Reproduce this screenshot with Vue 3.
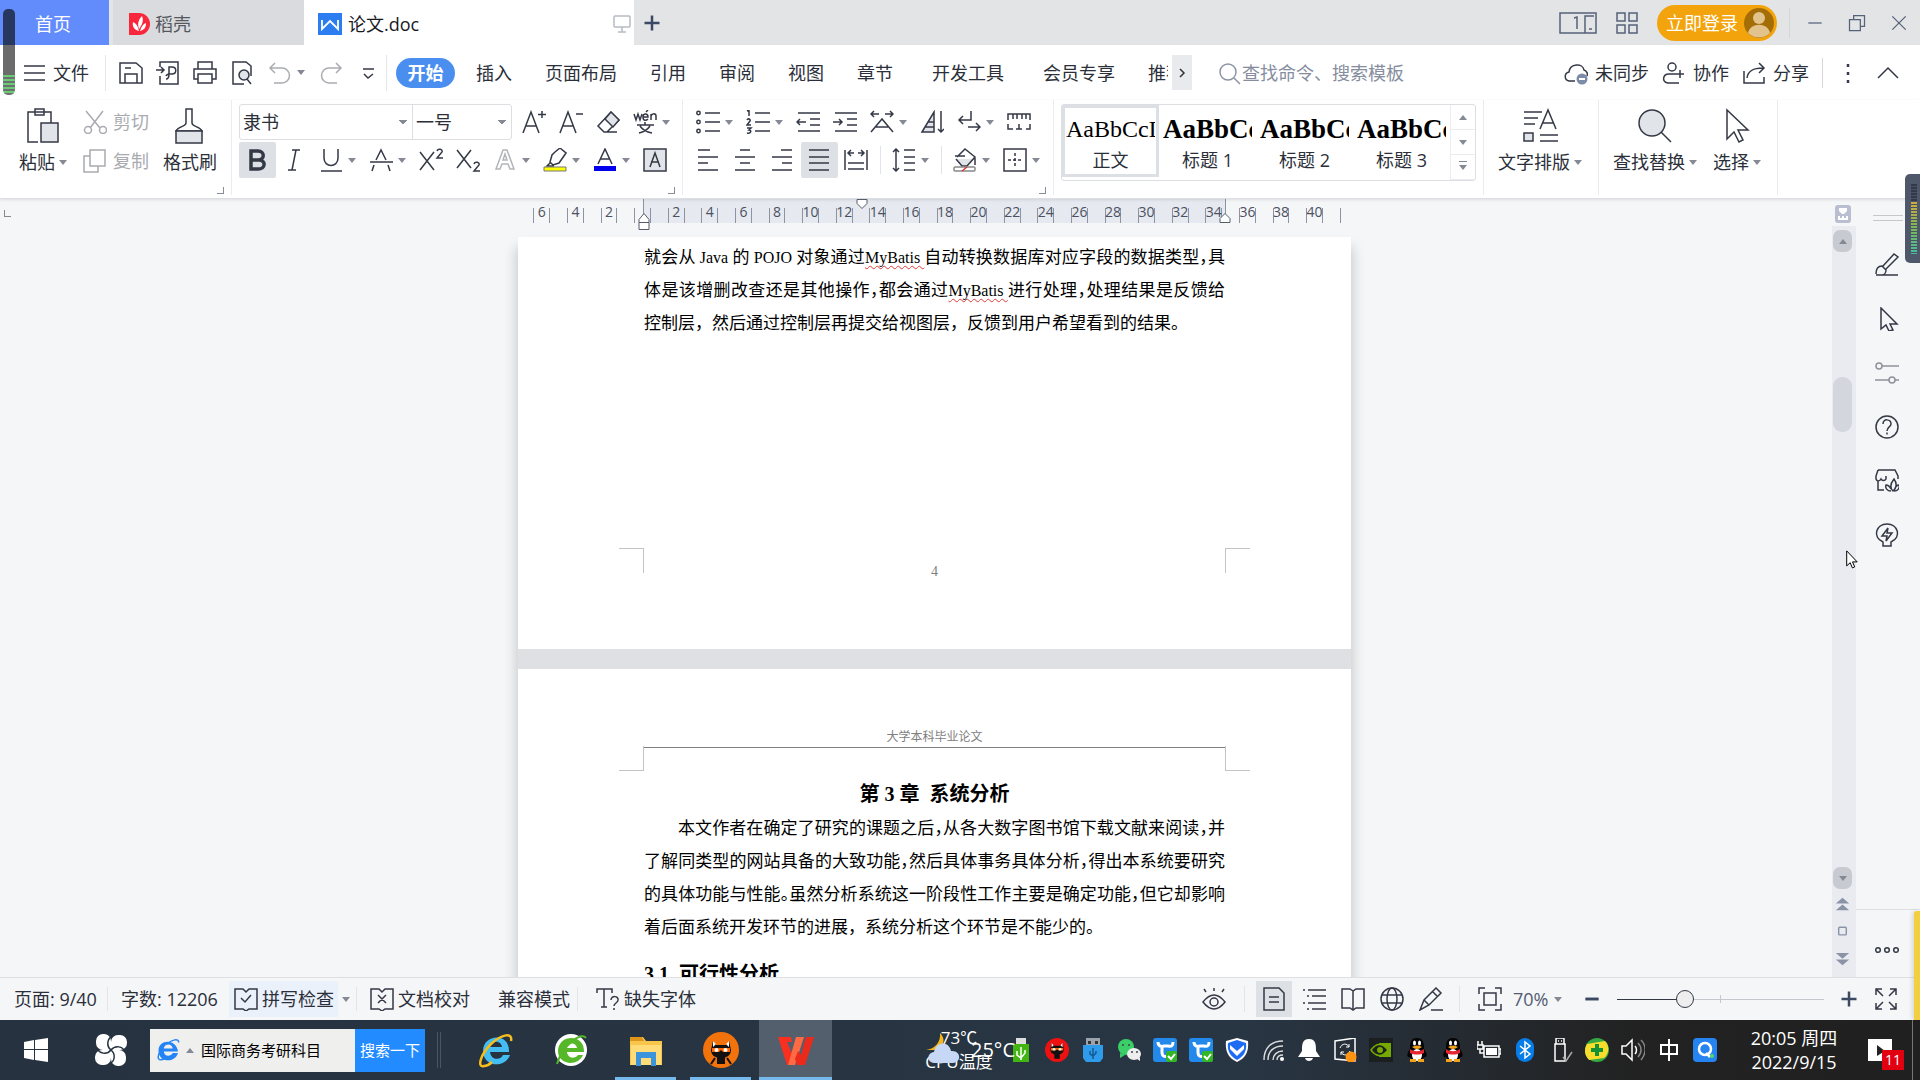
<template>
  <div class="desktop">
    <!-- 标签栏 -->
    <header class="title-bar">
      <button class="doc-tab home">首页</button>
      <button class="doc-tab shell">
        <svg class="icon" viewBox="0 0 24 24" v-html="icons.docer"></svg>稻壳
      </button>
      <button class="doc-tab current">
        <svg class="icon" viewBox="0 0 24 24" v-html="icons.writer"></svg>论文.doc
        <svg class="icon screen" viewBox="0 0 24 24" v-html="icons.screen"></svg>
      </button>
      <button class="new-tab" aria-label="新建"><svg class="icon" viewBox="0 0 24 24" v-html="icons.plus"></svg></button>
      <div class="window-tools">
        <svg class="icon wide" viewBox="0 0 38 24" v-html="icons.layout"></svg>
        <svg class="icon grid-icon" viewBox="0 0 24 24" v-html="icons.grid"></svg>
        <button class="login">立即登录<svg class="avatar" viewBox="0 0 30 30" v-html="icons.avatar"></svg></button>
        <span class="bar"></span>
        <button v-for="w in ['min', 'restore', 'close']" :key="w" class="win-btn" :aria-label="w">
          <svg class="icon" viewBox="0 0 24 24" v-html="icons[w]"></svg>
        </button>
      </div>
    </header>

    <!-- 菜单栏 -->
    <nav class="menu-bar">
      <button class="file-btn"><svg class="icon" viewBox="0 0 24 24" v-html="icons.menu"></svg>文件</button>
      <div class="quick">
        <button v-for="q in quick" :key="q" :class="['quick-btn', q]" :aria-label="q">
          <svg class="icon" viewBox="0 0 24 24" v-html="icons[q]"></svg>
          <i v-if="q === 'undo'" class="caret"></i>
        </button>
      </div>
      <div class="menu-tabs">
        <button class="menu-tab active">开始</button>
        <button v-for="m in menus" :key="m" class="menu-tab" :class="{ long: m === '开发工具' || m === '会员专享' }">{{ m }}</button>
        <button class="menu-tab cut">推荐</button>
      </div>
      <button class="more-tabs" aria-label="更多"><svg viewBox="0 0 20 20" v-html="icons.right"></svg></button>
      <label class="command-search">
        <svg class="icon" viewBox="0 0 24 24" v-html="icons.search"></svg>
        <input type="text" placeholder="查找命令、搜索模板" />
      </label>
      <div class="share-tools">
        <button v-for="s in shares" :key="s.icon" class="share-btn">
          <svg class="icon" viewBox="0 0 24 24" v-html="icons[s.icon]"></svg>{{ s.label }}
        </button>
        <span class="bar"></span>
        <button class="dots" aria-label="更多选项"><svg class="icon" viewBox="0 0 24 24" v-html="icons.dots"></svg></button>
        <button class="fold" aria-label="收起"><svg class="icon" viewBox="0 0 24 24" v-html="icons.up"></svg></button>
      </div>
    </nav>

    <!-- 功能区 -->
    <section class="ribbon">
      <div class="group clip-group">
        <button class="big"><svg viewBox="0 0 36 36" v-html="icons.paste"></svg><span>粘贴<i class="caret"></i></span></button>
        <div class="small-list">
          <button class="small"><svg class="icon" viewBox="0 0 24 24" v-html="icons.cut"></svg>剪切</button>
          <button class="small"><svg class="icon" viewBox="0 0 24 24" v-html="icons.copy"></svg>复制</button>
        </div>
        <button class="big brush"><svg viewBox="0 0 36 36" v-html="icons.painter"></svg><span>格式刷</span></button>
        <i class="launcher"></i>
      </div>

      <div class="group font-group">
        <div class="tool-row">
          <div class="selects">
            <select class="family" aria-label="字体"><option>隶书</option></select>
            <select class="size" aria-label="字号"><option>一号</option></select>
          </div>
          <tool-btn v-for="t in fontRow1" :key="t.icon" v-bind="t" />
        </div>
        <div class="tool-row">
          <tool-btn v-for="t in fontRow2" :key="t.icon" v-bind="t" />
        </div>
        <i class="launcher"></i>
      </div>

      <div class="group para-group">
        <div class="tool-row">
          <tool-btn v-for="t in paraRow1" :key="t.icon" v-bind="t" />
        </div>
        <div class="tool-row">
          <template v-for="t in paraRow2" :key="t.icon">
            <span v-if="t.bar" class="tool-bar"></span>
            <tool-btn v-bind="t" />
          </template>
        </div>
        <i class="launcher"></i>
      </div>

      <div class="group style-group">
        <div class="gallery">
          <button v-for="(s, i) in styles" :key="s" class="style-item" :class="{ selected: i === 0 }">
            <span class="sample">AaBbCcDd</span>
            <span class="style-name">{{ s }}</span>
          </button>
          <div class="gallery-scroll">
            <button aria-label="上"><i class="caret flip"></i></button>
            <button aria-label="下"><i class="caret"></i></button>
            <button aria-label="全部"><i class="caret lined"></i></button>
          </div>
        </div>
      </div>

      <div class="group layout-group">
        <button class="big"><svg viewBox="0 0 36 36" v-html="icons.textLayout"></svg><span>文字排版<i class="caret"></i></span></button>
      </div>
      <div class="group find-group">
        <button class="big"><svg viewBox="0 0 36 36" v-html="icons.find"></svg><span>查找替换<i class="caret"></i></span></button>
        <button class="big"><svg viewBox="0 0 36 36" v-html="icons.select"></svg><span>选择<i class="caret"></i></span></button>
      </div>
    </section>

    <!-- 文档区 -->
    <main class="workspace">
      <div class="doc-view">
        <i class="tab-mark"></i>
        <div class="ruler">
          <div class="ruler-text"></div>
          <div class="ruler-scale">
            <span v-for="(n, i) in rulerMarks" :key="i" class="mark" :class="{ last: i === rulerMarks.length - 1 }">{{ n }}</span>
          </div>
          <div class="indents">
            <svg class="indent first" viewBox="0 0 12 10"><path d="M1 .5h10v4l-5 5-5-5z" /></svg>
            <svg class="indent left" viewBox="0 0 12 18"><path d="M1 6.500l5-6 5 6v3H1zM1 9.500h10v7H1z" /></svg>
            <svg class="indent right" viewBox="0 0 12 10"><path d="M1 9.500v-4l5-5 5 5v4z" /></svg>
          </div>
        </div>
        <div class="pages">
          <article class="page page-four">
            <div class="lines">
              <p class="line full">就会从<span> Java </span>的<span> POJO </span>对象通过<span> <u>MyBatis </u></span>自动转换数据库对应字段的数据类型<b>，</b>具</p>
              <p class="line full">体是该增删改查还是其他操作<b>，</b>都会通过<span> <u>MyBatis </u></span>进行处理<b>，</b>处理结果是反馈给</p>
              <p class="line">控制层，然后通过控制层再提交给视图层，反馈到用户希望看到的结果。</p>
            </div>
            <div class="page-foot"><i class="crop bl"></i><span>4</span><i class="crop br"></i></div>
          </article>
          <article class="page page-five">
            <div class="page-head">大学本科毕业论文</div>
            <div class="head-crops"><i class="crop tl"></i><i class="crop tr"></i></div>
            <h1>第 3 章&nbsp; 系统分析</h1>
            <div class="lines">
              <p class="line full indented">本文作者在确定了研究的课题之后<b>，</b>从各大数字图书馆下载文献来阅读<b>，</b>并</p>
              <p class="line full">了解同类型的网站具备的大致功能<b>，</b>然后具体事务具体分析<b>，</b>得出本系统要研究</p>
              <p class="line full">的具体功能与性能<b>。</b>虽然分析系统这一阶段性工作主要是确定功能<b>，</b>但它却影响</p>
              <p class="line">着后面系统开发环节的进展，系统分析这个环节是不能少的。</p>
            </div>
            <h2>3.1&nbsp; 可行性分析</h2>
          </article>
        </div>
      </div>

      <div class="scroll-bar">
        <button class="ruler-toggle" aria-label="标尺"><svg viewBox="0 0 16 18" v-html="icons.rulerToggle"></svg></button>
        <div class="track">
          <button class="step" aria-label="向上"><i class="caret flip"></i></button>
          <div class="thumb"></div>
          <button class="step down" aria-label="向下"><i class="caret"></i></button>
          <svg class="jump" viewBox="0 0 20 88" v-html="icons.jump"></svg>
        </div>
      </div>

      <aside class="side-bar">
        <i class="grip"></i>
        <button v-for="s in sideTools" :key="s" class="side-btn" :aria-label="s">
          <svg class="icon" viewBox="0 0 24 24" v-html="icons[s]"></svg>
        </button>
        <button class="side-more" aria-label="更多"><svg class="icon" viewBox="0 0 24 24" v-html="icons.rings"></svg></button>
      </aside>
    </main>

    <!-- 状态栏 -->
    <footer class="status-bar">
      <span class="page-no">页面: 9/40</span>
      <span class="words">字数: 12206</span>
      <button class="spell"><svg class="icon" viewBox="0 0 24 24" v-html="icons.spell"></svg>拼写检查</button>
      <i class="caret"></i>
      <button class="proof"><svg class="icon" viewBox="0 0 24 24" v-html="icons.proof"></svg>文档校对</button>
      <span class="compat">兼容模式</span>
      <button class="missing"><svg class="icon" viewBox="0 0 24 24" v-html="icons.missing"></svg>缺失字体</button>
      <div class="view-tools">
        <button v-for="v in views" :key="v" :class="['view-btn', v]" :aria-label="v">
          <svg class="icon" viewBox="0 0 24 24" v-html="icons[v]"></svg>
        </button>
        <button class="zoom-value">70%<i class="caret"></i></button>
        <button class="zoom-step" aria-label="缩小"><svg class="icon" viewBox="0 0 24 24" v-html="icons.minus"></svg></button>
        <input v-model="zoom" class="zoom-slider" type="range" min="0" max="100" aria-label="缩放" />
        <button class="zoom-step" aria-label="放大"><svg class="icon" viewBox="0 0 24 24" v-html="icons.plus"></svg></button>
        <button class="full-btn" aria-label="全屏"><svg class="icon" viewBox="0 0 24 24" v-html="icons.fullscreen"></svg></button>
      </div>
    </footer>

    <!-- 任务栏 -->
    <footer class="task-bar">
      <button class="start" aria-label="开始菜单"><svg viewBox="0 0 24 24" v-html="icons.windows"></svg></button>
      <button class="pinwheel" aria-label="助手"><svg viewBox="0 0 32 32" v-html="icons.pinwheel"></svg></button>
      <form class="web-search" @submit.prevent>
        <svg class="ie" viewBox="0 0 32 32" v-html="icons.ieBlue"></svg>
        <i class="caret flip"></i>
        <input v-model="keyword" type="text" aria-label="搜索" />
        <button>搜索一下</button>
      </form>
      <i class="task-grip"></i>
      <button v-for="a in apps" :key="a.icon" class="app" :class="a.state" :aria-label="a.icon">
        <svg viewBox="0 0 36 36" v-html="icons[a.icon]"></svg>
      </button>

      <div class="task-right">
        <div class="weather">
          <span>73℃</span>
          <span>CPU温度</span>
          <svg class="cloud" viewBox="0 0 36 36" v-html="icons.weather"></svg>
          <span class="outdoor">25°C</span>
        </div>
        <div class="tray">
          <svg v-for="(t, i) in tray" :key="i" viewBox="0 0 24 24" v-html="icons[t]"></svg>
        </div>
        <div class="clock"><span>20:05 周四</span><span>2022/9/15</span></div>
        <button class="notice" aria-label="通知">
          <svg viewBox="0 0 24 24" v-html="icons.notice"></svg><span class="count">11</span>
        </button>
      </div>
    </footer>

    <!-- 悬浮音量计 -->
    <i class="meter meter-left"></i>
    <i class="meter meter-right"></i>
    <i class="yellow-strip"></i>
    <svg class="pointer" viewBox="0 0 12 19"><path d="M.7.9v15l3.500-3.200 2.200 5.200 2.300-1-2.200-5h4.700z" /></svg>
  </div>
</template>

<script setup>
import { ref, h } from 'vue'

const zoom = ref(31)
const keyword = ref('国际商务考研科目')

const quick = ['save', 'exportPdf', 'print', 'preview', 'undo', 'redo', 'more']
const menus = ['插入', '页面布局', '引用', '审阅', '视图', '章节', '开发工具', '会员专享']
const shares = [
  { icon: 'cloud', label: '未同步' },
  { icon: 'people', label: '协作' },
  { icon: 'share', label: '分享' }
]
const fontRow1 = [
  { icon: 'grow' }, { icon: 'shrink' }, { icon: 'eraser' }, { icon: 'pinyin', drop: true }
]
const fontRow2 = [
  { icon: 'bold', on: true }, { icon: 'italic' }, { icon: 'underline', drop: true },
  { icon: 'strike', drop: true }, { icon: 'sup' }, { icon: 'sub' },
  { icon: 'outline', drop: true }, { icon: 'highlight', drop: true },
  { icon: 'color', drop: true }, { icon: 'shade' }
]
const paraRow1 = [
  { icon: 'bullets', drop: true }, { icon: 'numbers', drop: true }, { icon: 'outdent' },
  { icon: 'indent' }, { icon: 'scale', drop: true }, { icon: 'sort' },
  { icon: 'wrap', drop: true }, { icon: 'tabs' }
]
const paraRow2 = [
  { icon: 'left' }, { icon: 'center' }, { icon: 'alignRight' }, { icon: 'justify', on: true },
  { icon: 'distribute' }, { icon: 'spacing', drop: true, bar: true },
  { icon: 'fill', drop: true, bar: true }, { icon: 'borders', drop: true }
]
const styles = ['正文', '标题 1', '标题 2', '标题 3']
const rulerMarks = [6, 4, 2, '', ...Array.from({ length: 20 }, (_, i) => (i + 1) * 2), '']
const sideTools = ['sideBrush', 'arrow', 'sliders', 'help', 'store', 'bulb']
const views = ['eye', 'pageView', 'list', 'book', 'globe', 'pen', 'fit']
const apps = [
  { icon: 'ie' }, { icon: 'greenE' }, { icon: 'folder', state: 'running' },
  { icon: 'cat', state: 'running' }, { icon: 'wps', state: 'running front' }
]
const tray = [
  'usbGreen', 'redCat', 'usbBlue', 'wechat', 'tencent', 'tencent', 'shield', 'wifi', 'bell', 'update',
  'nvidia', 'qq', 'qq', 'battery', 'bluetooth', 'eject', 'safe', 'volume', 'ime', 'browser'
]

// 工具按钮
const ToolBtn = (props) => h('button', { class: ['tool', { on: props.on }], 'aria-label': props.icon }, [
  h('svg', { class: 'icon', viewBox: '0 0 24 24', innerHTML: icons[props.icon] }),
  props.drop ? h('i', { class: 'caret' }) : null
])
ToolBtn.props = ['icon', 'drop', 'on', 'bar']

const catFace = '<path d="M9 9l3 4h10l3-4 2 9c0 5-4 8-10 8S7 23 7 18z" fill="#111"/><path d="M9 9l3 3-3 3zM25 9l-3 3 3 3z" fill="#fff"/><path d="M8 16h18v4h-7l-2-2-2 2H8z" fill="#f60"/><circle cx="12.500" cy="18" r="2" fill="#fff"/><circle cx="21.500" cy="18" r="2" fill="#fff"/><path d="M13 25h8v7h-8z" fill="#111"/>'

const icons = {
  docer: '<path d="M2 1h10a11 11 0 0 1 0 22H2z" fill="#f9263c" stroke="none"/><path d="M12 19c-5-1-7-5-6-9 3 1 5 4 6 9zm0-2c-2-6 0-10 3-13 2 5 0 9-3 13zm1 2c1-4 3-7 6-8 0 5-2 7-6 8z" fill="#fff" stroke="none"/>',
  writer: '<path d="M0 1h24v22H0z" fill="#2b7df0" stroke="none"/><path d="M4 8v9l8-8 8 8V8" stroke="#fff" stroke-width="1.800"/>',
  screen: '<rect x="4" y="4" width="16" height="11" rx="1"/><path d="M12 15v5M8 20h8"/>',
  plus: '<path d="M12 3v18M3 12h18" stroke-width="3"/>',
  minus: '<path d="M4 12h16" stroke-width="3.500"/>',
  layout: '<path d="M26 22H1V2h36v20H26V5h9M15 7l3-1v12M30 18h3"/>',
  grid: '<path d="M2 2h8v8H2zM14 2h8v8h-8zM2 14h8v8H2zM14 14h8v8h-8z"/>',
  avatar: '<circle cx="15" cy="15" r="15" fill="#a56d06"/><circle cx="15" cy="10" r="6" fill="#e1c38b"/><path d="M4 25c2-11 20-11 22 0-6 6-16 6-22 0z" fill="#e1c38b"/>',
  min: '<path d="M4 12h16"/>',
  restore: '<path d="M3 8h13v13H3zM8 8V3h13v13h-5"/>',
  close: '<path d="M4 4l16 16M20 4L4 20"/>',
  menu: '<path d="M2 5h21M2 12h21M2 19h21"/>',
  save: '<path d="M1 2h16l6 5v15H1zM6 22v-9h12v9M6 7h6"/>',
  exportPdf: '<path d="M4 6V1h18v22H4v-8M0 9h8M5 6l3 3-3 3M10 18c2 0 3-2 3-5V6h3c5 0 5 7 0 7-2 0-5-1-6 2"/>',
  print: '<path d="M5 8V1h14v7M5 18H1V8h22v10h-4M5 13h14v9H5z"/>',
  preview: '<path d="M14 23H3V1h13l5 4v10M21 23l-4-5"/><circle cx="14" cy="14" r="5" fill="#e1e4e9"/>',
  undo: '<path d="M7 2L2 7l5 5M2 7h12a7 7 0 0 1 0 15H6" stroke="#aaacb0"/>',
  redo: '<path d="M17 2l5 5-5 5M22 7H10a7 7 0 0 0 0 15h8" stroke="#aaacb0"/>',
  more: '<path d="M7 8h11M8 13l4 4 5-4"/>',
  right: '<path d="M8 6l4 4-4 4" fill="none" stroke="#333" stroke-width="1.500"/>',
  search: '<circle cx="10" cy="11" r="8"/><path d="M16 17l6 6"/>',
  cloud: '<path d="M11 20H5C0 19 0 12 5 11c1-9 14-9 15-2 3 1 4 4 3 6"/><circle cx="18" cy="18" r="5.500" fill="#7b8ba8" stroke="none"/><path d="M15 18h6" stroke="#fff" stroke-width="2"/>',
  people: '<circle cx="10" cy="6" r="4"/><path d="M14 13H7c-7 0-7 9-1 9h11M14 13h8M18 9v8"/>',
  share: '<path d="M2 10v12h20v-6M5 17C6 9 12 7 21 7M17 2l5 5-5 5"/>',
  dots: '<path d="M12 3v3M12 11v3M12 19v3" stroke-width="2.500"/>',
  up: '<path d="M2 17L12 7l10 10"/>',
  paste: '<path d="M13 34H3V4h23v13M10 1h9v6h-9z"/><path d="M16 15h17v19H16z" fill="#e1e4e9"/>',
  painter: '<path d="M14 1h6v14c0 4 8 3 10 8H4c2-5 10-4 10-8z"/><path d="M4 23h26v12H4z" fill="#e1e4e9"/>',
  cut: '<path d="M3 1l14 17M20 1L7 18"/><circle cx="5" cy="20" r="3.500"/><circle cx="20" cy="20" r="3.500"/>',
  copy: '<path d="M7 1h15v16H7zM7 7H1v16h14v-6"/>',
  grow: '<path d="M1 23L9 2l8 21M4 16h10M20 1v7M16 4.500h8"/>',
  shrink: '<path d="M1 23L9 2l8 21M4 16h10M17 4h7"/>',
  eraser: '<path d="M8 22l-6-6L15 2l8 8-12 12zM8 22h13"/><path d="M9 9l6-7 8 8-6 7z" fill="#e1e4e9"/>',
  pinyin: '<path d="M1 4l2 6 2-6 2 6 2-6M10 7h5c0-4-5-4-5 0s3 4 5 2M18 10V4M18 6c1-3 5-3 5 0v4M13 2l2-2M4 15h17M12 12v3M7 16c2 3 7 6 12 7M17 16c-2 3-6 6-11 7"/>',
  bold: '<path d="M6 3v18h7c8 0 8-9 1-9H6h7c7 0 7-9 0-9z" stroke-width="3.500"/>',
  italic: '<path d="M10 2h8M6 22h8M14 2l-4 20"/>',
  underline: '<path d="M5 1v9c0 10 14 10 14 0V1M2 23h21"/>',
  strike: '<path d="M1 14h23M7 12l5-10 5 10M5 17l-2 6M19 17l2 6"/>',
  sup: '<path d="M1 4l14 18M15 4L1 22M18 3c1-3 6-2 5 1l-5 6h6"/>',
  sub: '<path d="M1 2l14 18M15 2L1 20M18 16c1-3 6-2 5 1l-5 6h6"/>',
  outline: '<path d="M3 21L10 2h4l7 19h-4l-2-5H9l-2 5zM10 12h4l-2-6z" stroke="#b3b5b9"/>',
  highlight: '<path d="M12 4l5-4 6 5-7 10-6 2-3-3 2-7zM8 14l-4 4h7"/><path d="M1 19h22v4H1z" fill="#ff0" stroke="#777" stroke-width="1"/>',
  color: '<path d="M5 16l7-15 7 15M7 11h10"/><path d="M1 18h22v5H1z" fill="#00e" stroke="none"/>',
  shade: '<path d="M1 1h22v22H1z" fill="#e1e4e9"/><path d="M7 19l5-14 5 14M8 14h8"/>',
  bullets: '<path d="M9 3h15M9 12h15M9 21h15"/><circle cx="2.500" cy="3" r="1.700"/><circle cx="2.500" cy="12" r="1.700"/><circle cx="2.500" cy="21" r="1.700"/>',
  numbers: '<path d="M9 3h15M9 12h15M9 21h15M1 1l2-1v6M1 10c1-2 4-1 3 1l-3 4h4M1 18h4l-2 2c3 0 2 4-2 3"/>',
  outdent: '<path d="M2 3h22M14 9h10M14 15h10M2 21h22M1 12h9M4 9l-3 3 3 3"/>',
  indent: '<path d="M2 3h22M14 9h10M14 15h10M2 21h22M0 12h9M6 9l3 3-3 3"/>',
  scale: '<path d="M1 22L12 9l11 13M6 17h12M1 4h8M4 1L1 4l3 3M23 4h-8M20 1l3 3-3 3"/>',
  sort: '<path d="M2 22L14 2v20zM8 12h6M5 17h9" fill="#e1e4e9"/><path d="M21 1v21M18 19l3 3 3-3"/>',
  wrap: '<path d="M14 1v9H2M6 6l-4 4 4 4M11 17h12M19 13l4 4-4 4"/>',
  tabs: '<path d="M1 10V4h22v6M6 4v5M10 4v5M15 4v5M19 4v5M1 14v5h5M23 14v5h-4M9 19h6M12 14v5"/>',
  left: '<path d="M2 2h12M2 9h20M2 15h10M2 22h20"/>',
  center: '<path d="M7 2h10M2 9h20M7 15h10M2 22h20"/>',
  alignRight: '<path d="M11 2h11M2 9h20M12 15h10M2 22h20"/>',
  justify: '<path d="M2 2h20M2 9h20M2 15h20M2 22h20"/>',
  distribute: '<path d="M1 2v20M23 2v20M4 15h16M4 21h16M4 5h6M7 2L4 5l3 3M14 5h6M17 2l3 3-3 3"/>',
  spacing: '<path d="M4 1v22M1 4l3-3 3 3M1 20l3 3 3-3M12 2h11M12 9h11M12 15h11M12 22h11"/>',
  fill: '<path d="M4 11h17l-7 7H9z" fill="#e1e4e9" stroke="none"/><path d="M2 8h10M4 9L12 1l10 8-8 9H9l-6-7M22 10v7"/><rect x="1" y="19" width="21" height="4" rx="1" stroke="#888" fill="#fff"/><path d="M9 23l5-4" stroke="#d33"/>',
  borders: '<path d="M1 1h22v22H1z"/><path d="M12 5v14M5 12h14" stroke-dasharray="3 2"/>',
  textLayout: '<path d="M2 4h18M2 10h14M2 16h11M18 21l8-19 8 19M21 15h10M18 27h18M18 33h18"/><path d="M2 25h9v8H2z" fill="#e1e4e9"/>',
  find: '<circle cx="15" cy="15" r="13" fill="#e1e4e9"/><path d="M24 24l10 10"/>',
  select: '<path d="M8 2v29l7-7 5 10 4-2-5-10h10z"/>',
  rulerToggle: '<rect width="16" height="18" rx="3" fill="#b9bed0"/><path d="M4 3h8v3L9 9H7L4 6zM3 11h2v2h2v-2h2v2h2v-2h2v4H3z" fill="#fff"/>',
  jump: '<path d="M3 13l7-6 7 6zM3 20l7-6 7 6zM3 65h14l-7 6zM3 72h14l-7 6z" fill="#8b93a6"/><rect x="6" y="38" width="8" height="8" rx="1" fill="none" stroke="#8b93a6" stroke-width="1.500"/>',
  sideBrush: '<path d="M1 22h22M1 21c0-5 2-8 6-8l4 4c0 3-2 5-4 5M8 13L19 1l4 3-12 12"/>',
  arrow: '<path d="M6 1v21l5-4 3 6 4-1-3-6h7z"/>',
  sliders: '<g stroke="#8e929b"><circle cx="4" cy="5" r="3"/><path d="M7 5h17M0 19h14M20 19h4"/><circle cx="17" cy="19" r="3"/></g>',
  help: '<circle cx="12" cy="12" r="11"/><path d="M8 9c0-6 8-5 8 0 0 3-4 3-4 7M12 17.500v2"/>',
  store: '<path d="M9 21H3v-9M3 1h17l3 6v3M3 1L1 7v3c1 3 4 2 5 0 1 2 4 2 5 0V7M18 22c-3-3-3-7 1-12 3 4 3 9-1 12zM16 22c-4 0-6-3-5-6 2 0 4 2 5 4M19 22c4 0 6-3 5-6-2 0-3 1-4 3"/>',
  bulb: '<path d="M8 19c-11-5-7-18 4-18s15 13 4 18v4H8zM13 5l-6 8h5l-1 5 6-8h-5z"/>',
  rings: '<circle cx="3" cy="12" r="2.300"/><circle cx="12" cy="12" r="2.300"/><circle cx="21" cy="12" r="2.300"/>',
  spell: '<path d="M9 22H1V2h8l3 3 3-3h8v20h-8l-3 2zM7 11l4 4 6-7"/>',
  proof: '<path d="M9 22H1V2h8l3 3 3-3h8v20h-8l-3 2zM8 8l8 8M16 8l-8 8"/>',
  missing: '<path d="M1 6V2h15v4M8 2v18M5 20h6M15 13c0-5 8-4 7 0 0 3-4 3-4 6M18 21v2"/>',
  eye: '<path d="M1 15q11-14 22 0-11 14-22 0zM12 1v3M2 2l2 3M22 2l-2 3"/><circle cx="12" cy="15" r="4"/>',
  pageView: '<path d="M2 1h15l5 5v17H2zM7 10h10M7 15h10"/>',
  list: '<path d="M6 3h18M10 9h14M6 16h18M10 22h14M1 3h2M5 9h2M1 16h2M5 22h2"/>',
  book: '<path d="M12 4l-3-2H1v19h8l3 2 3-2h8V2h-8zM12 4v19"/>',
  globe: '<circle cx="12" cy="12" r="11"/><ellipse cx="12" cy="12" rx="5" ry="11"/><path d="M2 8h20M2 16h20"/>',
  pen: '<path d="M1 23l4-10L17 1l5 5-12 12zM5 13l5 5M12 23h12M14 5l5 5"/>',
  fit: '<path d="M1 7V1h6M17 1h6v6M23 17v6h-6M7 23H1v-6M6 6h12v12H6z"/>',
  fullscreen: '<path d="M2 8V2h6M2 2l7 7M16 2h6v6M22 2l-7 7M22 16v6h-6M22 22l-7-7M8 22H2v-6M2 22l7-7"/>',
  windows: '<path d="M0 4l10-2v9H0zM11 2l13-2v11H11zM0 12h10v10L0 20zM11 12h13v12l-13-2z" fill="#fff"/>',
  pinwheel: '<g fill="#fff"><rect x="1" y="0" width="15" height="16" rx="7"/><rect x="16" y="1" width="16" height="15" rx="7"/><rect x="0" y="16" width="16" height="15" rx="7"/><rect x="16" y="16" width="15" height="16" rx="7"/><path d="M9 9h14v14H9z"/></g><path d="M16 16C11 12 12 4 18 2M16 16c4-5 12-4 14 2M16 16c5 4 4 12-2 14M16 16c-4 5-12 4-14-2" fill="none" stroke="#26323f" stroke-width="1.500"/>',
  ieBlue: '<path d="M26 18H12c1 7 9 7 12 2h7c-4 14-26 13-26-3C5 1 29 1 31 18zM12 14h12c-1-7-11-7-12 0z" fill="#2584f5" transform="translate(-3 0)"/><path d="M29 6c0-6-9-4-16 2M4 18C-1 27 2 32 11 27" fill="none" stroke="#2584f5" stroke-width="2"/>',
  ie: '<path d="M31 20H12c1 8 10 9 13 3h7c-5 14-27 12-27-4C5 2 32 0 31 20zM12 15h12c-1-7-11-7-12 0z" fill="#43bdf2"/><path d="M33 9c2-9-9-7-20 3C2 23-1 36 6 34c3 0 6-2 8-4" fill="none" stroke="#f5bd1e" stroke-width="2.500"/>',
  greenE: '<circle cx="18" cy="18" r="16" fill="#fff"/><path d="M31 20H14c1 7 8 7 11 3h5c-5 12-25 10-25-4C5 2 32 1 31 20zM14 16h10c-1-6-9-6-10 0z" fill="#56b829"/><path d="M33 6C28-1 9 14 4 32" fill="none" stroke="#56b829" stroke-width="2"/>',
  folder: '<path d="M2 5h13l3 4h16v24H2z" fill="#f7c64b"/><path d="M2 5h12l2 4H2z" fill="#dd961a"/><path d="M3 13h30v20H3z" fill="#ffdc78"/><path d="M8 34V20h20v14h-5v-8H13v8z" fill="#3c95dc"/>',
  cat: '<circle cx="18" cy="18" r="18" fill="#f2720c"/><g transform="translate(1 0)">' + catFace + '</g><path d="M8 32l4-6M28 32l-4-6" stroke="#111" stroke-width="2"/>',
  wps: '<path d="M0 5h13l1 5H9l7 16-4 7H9z" fill="#f92f20"/><path d="M18 5h8l-9 28h-7z" fill="#ff6a42"/><path d="M28 5h8l-9 28h-8l-2-6 3-8 3 4z" fill="#ec2a1c"/>',
  weather: '<path d="M15 2c7 7 3 15-6 17H1C10 18 16 11 15 2z" fill="#f6b61b"/><path d="M9 32c-8-1-7-10 0-11C11 10 24 10 26 20c10-1 11 11 2 12z" fill="#c6d8f5"/>',
  usbGreen: '<path d="M7 0h10v7H7z" fill="#ddd"/><path d="M4 6h16v18H4z" fill="#43b512"/><path d="M12 9v13M8 13v4l4 3 4-5v-3" stroke="#fff" fill="none" stroke-width="1.500"/>',
  redCat: '<circle cx="12" cy="12" r="12" fill="#ee1111"/><g transform="translate(.5 -1) scale(.68)">' + catFace + '</g>',
  usbBlue: '<path d="M5 0h14v8H5z" fill="#9ba3ad"/><path d="M7 3h3v3H7zM14 3h3v3h-3z" fill="#333"/><path d="M2 7h20v13l-3 4H5l-3-4z" fill="#2e9cea"/><path d="M12 10v11M9 13v3l3 2 3-3v-2" stroke="#145a92" fill="none" stroke-width="1.500"/>',
  wechat: '<circle cx="9" cy="9" r="8" fill="#3bcf68"/><path d="M3 15v5l5-3z" fill="#3bcf68"/><ellipse cx="17" cy="16" rx="7" ry="6" fill="#eee"/><path d="M20 21l3 2v-4z" fill="#eee"/><path d="M6 6v2M12 6v2M15 13v2M20 13v2" stroke="#444" stroke-width="1.500"/>',
  tencent: '<rect width="24" height="24" rx="3" fill="#2389ea"/><path d="M5 4c0 4 3 5 6 4h4c4 1 5-1 5-4M9 8v6c0 5 3 5 6 4" stroke="#fff" stroke-width="3" fill="none"/><rect x="13" y="13" width="11" height="11" rx="2" fill="#32b624"/><path d="M15 18l3 3 4-5" stroke="#fff" stroke-width="2" fill="none"/>',
  shield: '<path d="M12 0l11 3c1 10-2 17-11 21C3 20 0 13 1 3z" fill="#fff"/><path d="M12 2l9 3c1 8-2 13-9 17C5 18 2 13 3 5z" fill="#1e6cf2"/><path d="M5 7l7 6 7-6v4l-7 7-7-7z" fill="#fff"/>',
  wifi: '<path d="M3 22C3 10 10 3 22 3M7 22c0-9 6-14 15-14M12 22c0-5 4-9 10-9M16 22c0-3 2-5 6-5" fill="none" stroke="#ddd" stroke-width="1.400"/><circle cx="21" cy="21" r="2" fill="#fff"/>',
  bell: '<path d="M12 1c7 0 7 6 7 12l4 6H1l4-6C5 7 5 1 12 1zM8 20h8c-1 4-7 4-8 0z" fill="#fff"/>',
  update: '<path d="M2 3l20-3v23L2 21z" fill="none" stroke="#fff" stroke-width="1.500"/><path d="M7 10c2-5 7-5 9-1M16 6v3h-3M17 13c-2 5-7 5-9 1M8 17v-3h3" fill="none" stroke="#fff"/><circle cx="18" cy="19" r="5.500" fill="#ff9412"/>',
  nvidia: '<path d="M0 0h24v24H0z" fill="#1b1f1f"/><path d="M10 5h12v14H10z" fill="#76a900"/><path d="M2 12q8-11 17 0-9 11-17 0z" fill="#1b1f1f" stroke="#76a900" stroke-width="1.500"/><circle cx="11" cy="12" r="3" fill="#76a900"/>',
  qq: '<path d="M12 0c7 0 7 6 7 11 4 5 3 9 0 8-1 4-13 4-14 0-3 1-4-3 0-8 0-5 0-11 7-11z" fill="#050505"/><ellipse cx="12" cy="17" rx="5" ry="6" fill="#fff"/><path d="M5 11c4 3 10 3 14 0v4c-4 2-10 2-14 0z" fill="#e52633"/><ellipse cx="9.500" cy="5" rx="1.500" ry="2.500" fill="#fff"/><ellipse cx="14.500" cy="5" rx="1.500" ry="2.500" fill="#fff"/><path d="M7 9q5-3 10 0-5 4-10 0zM5 21h6v3H5zM13 21h6v3h-6z" fill="#f5a21b"/>',
  battery: '<path d="M7 8h15v11H7zM22 11h2v5h-2M1 3v4M5 3v4M0 7h6v4H0zM3 11v4h4" fill="none" stroke="#fff" stroke-width="1.500"/><path d="M9 10h11v7H9z" fill="#fff"/>',
  bluetooth: '<rect x="3" width="18" height="24" rx="9" fill="#067de8"/><path d="M7 8l10 8-5 4V4l5 4-10 8" fill="none" stroke="#fff" stroke-width="1.500"/>',
  eject: '<path d="M6 6h10v17H6zM7 0h8v6H7zM9 3h1M12 3h1" fill="none" stroke="#fff" stroke-width="1.500"/><path d="M14 19l3 4 6-9" fill="none" stroke="#aaa" stroke-width="1.500"/>',
  safe: '<circle cx="12" cy="12" r="12" fill="#35aa42"/><path d="M2 6l18-3c5 5 4 13-1 17L4 22C-1 17-1 11 2 6z" fill="#f8dd2d"/><path d="M12 6v12M6 12h12" stroke="#159135" stroke-width="4"/>',
  volume: '<path d="M1 8h4l6-6v20l-6-6H1z" fill="none" stroke="#fff" stroke-width="1.500"/><path d="M14 8c2 2 2 6 0 8" fill="none" stroke="#fff" stroke-width="1.500"/><path d="M17 5c4 4 4 10 0 14M20 2c6 6 5 14 0 20" fill="none" stroke="#888" stroke-width="1.500"/>',
  ime: '<path d="M4 7h16v9H4zM12 1v22" fill="none" stroke="#fff" stroke-width="2"/>',
  browser: '<rect width="24" height="24" rx="4" fill="#2684f2"/><circle cx="12" cy="11" r="6" fill="none" stroke="#fff" stroke-width="2.500"/><path d="M13 15l4 4" stroke="#fff" stroke-width="2.500"/><circle cx="19" cy="18" r="2" fill="#51dd66"/>',
  notice: '<path d="M0 1h24v22H0z" fill="#fff"/><path d="M9 7l8 6-8 5z" fill="#222"/>'
}
</script>

<style>
body {
  margin: 0;
}
</style>

<style scoped>
.desktop {
  position: relative;
  display: flex;
  flex-direction: column;
  height: 100vh;
  overflow: hidden;
  background: #fff;
  color: #2b2f3a;
  font-family: "Open Sans", "Noto Sans CJK SC", sans-serif;
  font-size: 18px;
  line-height: 24px;
}

.desktop :deep(button) {
  display: flex;
  align-items: center;
  padding: 0;
  border: 0;
  background: none;
  color: inherit;
  font: inherit;
  white-space: nowrap;
}

svg {
  flex: none;
}

.desktop :deep(.icon) {
  flex: none;
  width: 24px;
  height: 24px;
  fill: none;
  stroke: #343946;
  stroke-width: 1.5;
}

.desktop :deep(.caret) {
  flex: none;
  border: 4px solid transparent;
  border-top: 5px solid #858994;
  border-bottom: 0;
}

.desktop .caret.flip {
  transform: rotate(180deg);
}

.bar {
  flex: none;
  width: 1px;
  height: 30px;
  background: #d5d7db;
}

/* 标签栏 */
.title-bar {
  display: flex;
  flex: none;
  height: 45px;
  background: #e2e4e6;
}

.desktop .doc-tab {
  flex: none;
  padding-top: 3px;
}

.desktop .home {
  width: 109px;
  margin-right: 4px;
  padding-left: 35px;
  background: #628cfb;
  color: #fff;
}

.desktop .shell {
  width: 191px;
  padding-left: 14px;
  gap: 4px;
  background: #dadbde;
  color: #555861;
}

.desktop .current {
  width: 330px;
  padding-left: 14px;
  gap: 6px;
  background: #fff;
  color: #17191f;
}

.desktop .screen {
  margin-left: auto;
  stroke: #b6bac4;
}

.desktop .new-tab {
  width: 36px;
  justify-content: center;
}

.new-tab .icon,
.zoom-step .icon {
  width: 20px;
  stroke: #3c4963;
}

.window-tools {
  display: flex;
  align-items: center;
  margin-left: auto;
}

.window-tools .icon {
  stroke: #56617a;
}

.window-tools .wide {
  width: 38px;
  margin-right: 18px;
}

.window-tools .grid-icon {
  margin-right: 18px;
}

.desktop .login {
  width: 120px;
  height: 36px;
  padding-left: 9px;
  gap: 6px;
  border-radius: 18px;
  box-sizing: border-box;
  background: #f3a40c;
  color: #fff;
}

.avatar {
  width: 30px;
}

.login + .bar {
  margin: 0 4px 0 12px;
}

.desktop .win-btn {
  width: 42px;
  justify-content: center;
}

.win-btn .icon {
  width: 20px;
}

/* 菜单栏 */
.menu-bar {
  display: flex;
  align-items: center;
  flex: none;
  height: 55px;
}

.desktop .file-btn {
  width: 106px;
  height: 36px;
  padding-left: 22px;
  gap: 7px;
  border-right: 1px solid #e6e7ea;
}

.quick {
  display: flex;
  align-items: center;
  height: 36px;
  padding-left: 6px;
  width: 274px;
  border-right: 1px solid #e6e7ea;
}

.desktop .quick-btn {
  width: 37px;
  justify-content: center;
}

.desktop .undo {
  width: 52px;
  gap: 5px;
  padding-left: 1px;
}

.menu-tabs {
  display: flex;
  align-items: center;
  gap: 33px;
  width: 774px;
  padding-left: 9px;
  overflow: hidden;
}

.desktop .menu-tab.active {
  width: 59px;
  height: 30px;
  margin-right: -12px;
  justify-content: center;
  border-radius: 15px;
  background: #4a8ff0;
  color: #fff;
  font-weight: bold;
}

.menu-tab.long {
  margin-left: 6px;
}

.desktop .menu-tab.cut {
  width: 20px;
  overflow: hidden;
}

.desktop .more-tabs {
  width: 20px;
  height: 35px;
  margin-left: 2px;
  background: #e8eaed;
}

.command-search {
  display: flex;
  align-items: center;
  margin-left: 26px;
}

.command-search .icon {
  stroke: #8d94a5;
}

.command-search input {
  width: 180px;
  padding: 0;
  border: 0;
  outline: 0;
  background: none;
  font: inherit;
}

.command-search input::placeholder {
  color: #858d9e;
}

.share-tools {
  display: flex;
  align-items: center;
  margin-left: auto;
  padding-right: 20px;
}

.desktop .share-btn {
  gap: 7px;
  margin-right: 13px;
}

.dots {
  margin: 0 16px 0 13px;
}

/* 功能区 */
.ribbon {
  display: flex;
  flex: none;
  height: 99px;
  border-bottom: 1px solid #dcdee1;
  box-sizing: border-box;
  box-shadow: 0 1px 3px rgba(0, 0, 0, 0.1);
  z-index: 1;
}

.group {
  position: relative;
  box-sizing: border-box;
  height: 95px;
  padding-top: 4px;
  border-right: 1px solid #ebecef;
}

.launcher {
  position: absolute;
  right: 7px;
  bottom: 1px;
  width: 6px;
  height: 6px;
  border-right: 1px solid #888d98;
  border-bottom: 1px solid #888d98;
}

.clip-group {
  display: flex;
  width: 232px;
  padding-left: 19px;
}

.desktop .big {
  flex-direction: column;
  align-items: flex-start;
  height: 72px;
  padding-top: 4px;
  gap: 6px;
  box-sizing: border-box;
}

.big > svg {
  align-self: center;
  width: 36px;
  height: 36px;
  fill: none;
  stroke: #343946;
  stroke-width: 1.5;
}

.big > span {
  display: flex;
  align-items: center;
  gap: 4px;
}

.small-list {
  display: flex;
  flex-direction: column;
  gap: 3px;
  margin: 0 14px 0 16px;
}

.desktop .small {
  height: 36px;
  gap: 6px;
  color: #a9abb0;
}

.small .icon {
  stroke: #a9abb0;
}

.font-group {
  width: 451px;
  padding-left: 7px;
}

.tool-row {
  display: flex;
  align-items: center;
  height: 36px;
  margin-bottom: 2px;
}

.selects {
  display: flex;
  width: 273px;
  height: 36px;
  margin-right: 4px;
  box-sizing: border-box;
  border: 1px solid #dcdee1;
  border-radius: 3px;
}

.selects select {
  padding: 0 3px;
  border: 0;
  appearance: none;
  background: linear-gradient(to bottom right, #858994 50%, transparent 50%) right 5px center / 4px 5px no-repeat,
    linear-gradient(to bottom left, #858994 50%, transparent 50%) right 9px center / 4px 5px no-repeat;
  color: inherit;
  font: inherit;
}

.family {
  width: 172px;
}

.selects .size {
  width: 99px;
  border-left: 1px solid #dcdee1;
}

.tool-row :deep(.tool) {
  height: 36px;
  padding: 0 7px 0 6px;
  border-radius: 2px;
}

.tool-row :deep(.tool.on) {
  background: #dde1e6;
}

.tool-row :deep(.tool .caret) {
  margin: 0 0 0 5px;
}

.para-group {
  width: 371px;
  padding-left: 7px;
}

.tool-bar {
  width: 1px;
  height: 28px;
  margin: 0 5px;
  background: #e2e4e8;
}

.style-group {
  width: 430px;
  padding-left: 7px;
}

.gallery {
  display: flex;
  width: 415px;
  height: 77px;
  box-sizing: border-box;
  border: 1px solid #dcdee1;
  border-radius: 3px;
}

.desktop .style-item {
  flex-direction: column;
  width: 97px;
  height: 72px;
  padding: 6px 1px 0;
  box-sizing: border-box;
  border: 3px solid transparent;
}

.desktop .style-item.selected {
  border-color: #dcdfe3;
}

.sample {
  width: 89px;
  height: 30px;
  overflow: hidden;
  color: #000;
  font: bold 27px/30px "Liberation Serif", serif;
  text-align: left;
}

.selected .sample {
  font-size: 24px;
  font-weight: normal;
}

.style-name {
  margin-top: 4px;
}

.gallery-scroll {
  display: grid;
  flex: 1;
  grid-template-rows: repeat(3, 1fr);
  border-left: 1px solid #ebecef;
}

.desktop .gallery-scroll button {
  justify-content: center;
  border-bottom: 1px solid #ebecef;
}

.gallery-scroll .lined {
  position: relative;
}

.gallery-scroll .lined::before {
  content: "";
  position: absolute;
  left: -4px;
  top: -9px;
  width: 8px;
  height: 1px;
  background: #858994;
}

.layout-group {
  width: 115px;
  padding-left: 14px;
}

.find-group {
  display: flex;
  width: 179px;
  gap: 16px;
  padding-left: 14px;
}

/* 文档区 */
.workspace {
  display: flex;
  flex: 1;
  min-height: 0;
  background: #f5f6f8;
}

.doc-view {
  position: relative;
  display: flex;
  flex: 1;
  flex-direction: column;
  align-items: center;
  min-width: 0;
  padding-left: 37px;
  overflow: hidden;
}

.tab-mark {
  position: absolute;
  left: 4px;
  top: 11px;
  width: 6px;
  height: 6px;
  border-left: 1px solid #888;
  border-bottom: 1px solid #888;
}

.ruler {
  display: grid;
  flex: none;
  width: 833px;
  height: 38px;
}

.ruler-text,
.ruler-scale,
.indents {
  grid-area: 1 / 1;
}

.ruler-text,
.indents {
  position: relative;
  width: 581px;
  height: 24px;
  margin-left: 126px;
}

.ruler-text {
  background: #e6e9f0;
  box-shadow: -1px 0 #8d93a3, 1px 0 #8d93a3;
}

.indents {
  z-index: 2;
}

.indent {
  position: absolute;
  width: 12px;
  fill: #fff;
  stroke: #555c6b;
}

.indent.first {
  left: 212px;
  top: 0;
}

.indent.left {
  left: -6px;
  top: 14px;
}

.indent.right {
  right: -6px;
  top: 14px;
}

.ruler-scale {
  display: grid;
  grid-template-columns: repeat(25, 1fr);
  width: 840px;
  height: 15px;
  margin: 9px 0 0 7px;
  color: #4b5160;
  font-size: 14px;
  line-height: 8px;
  z-index: 1;
}

.mark {
  display: flex;
  justify-content: center;
  width: 50%;
  margin: 0 auto;
  box-sizing: border-box;
  border-left: 1px solid #8d93a3;
  border-right: 1px solid #8d93a3;
}

.mark.last {
  border-right-color: transparent;
}

.pages {
  display: flex;
  flex-direction: column;
  flex: none;
  gap: 20px;
  width: 833px;
  background: #dfe0e3;
  box-shadow: 0 12px 12px 2px rgba(0, 0, 0, 0.18);
}

.page {
  box-sizing: border-box;
  width: 833px;
  padding: 0 126px;
  background: #fff;
  color: #000;
  font-family: "Liberation Serif", "Noto Sans CJK SC", serif;
}

.page-four {
  height: 412px;
  padding-top: 4px;
}

.page-five {
  height: 500px;
  padding-top: 58px;
}

.line {
  margin: 0;
  font-size: 17px;
  line-height: 33px;
  white-space: nowrap;
}

.line.full {
  text-align-last: justify;
}

.line.indented {
  padding-left: 34px;
}

.line span {
  font-size: 16px;
}

.line b {
  font-weight: normal;
  font-feature-settings: "halt";
}

.line u {
  text-decoration: underline wavy #e03a3a 1px;
  text-underline-offset: 2px;
  text-decoration-skip-ink: none;
}

.page-foot {
  display: flex;
  justify-content: space-between;
  margin: 208px -25px 0;
  color: #808080;
  font-size: 14px;
}

.page-foot span {
  padding-top: 12px;
}

.crop {
  width: 24px;
  height: 24px;
  border: 0 solid #c4c4c4;
}

.crop.bl {
  border-width: 1px 1px 0 0;
}

.crop.br {
  border-width: 1px 0 0 1px;
}

.crop.tl {
  border-width: 0 1px 1px 0;
}

.crop.tr {
  border-width: 0 0 1px 1px;
}

.page-head {
  height: 20px;
  border-bottom: 1px solid #808080;
  color: #808080;
  font-size: 12px;
  line-height: 20px;
  text-align: center;
}

.head-crops {
  display: flex;
  justify-content: space-between;
  margin: -2px -25px 0;
}

.page h1 {
  margin: 9px 0 4px;
  font-size: 20px;
  line-height: 28px;
  text-align: center;
}

.page h2 {
  margin: 16px 0 0;
  font-size: 20px;
  line-height: 28px;
}

.scroll-bar {
  display: flex;
  flex-direction: column;
  width: 24px;
}

.desktop .ruler-toggle {
  height: 27px;
  padding: 2px 0 0 3px;
}

.ruler-toggle svg {
  width: 16px;
}

.track {
  display: flex;
  flex: 1;
  flex-direction: column;
  padding: 4px 4px 0 1px;
  background: #e9ebf0;
}

.desktop .step {
  justify-content: center;
  height: 22px;
  border-radius: 7px;
  background: #c7cad1;
}

.thumb {
  height: 55px;
  margin-top: 125px;
  border-radius: 9px;
  background: #d3d6dc;
}

.step.down {
  margin-top: auto;
}

.jump {
  height: 88px;
}

.side-bar {
  display: flex;
  flex-direction: column;
  align-items: center;
  width: 64px;
}

.grip {
  width: 30px;
  height: 4px;
  margin: 16px 0 32px;
  border: 1px solid #c4c7cc;
  border-width: 1px 0;
}

.desktop .side-btn {
  height: 24px;
  margin-bottom: 30px;
  padding-right: 3px;
}

.desktop .side-more {
  width: 64px;
  height: 68px;
  margin-top: auto;
  padding: 0 3px 0 0;
  justify-content: center;
  box-sizing: border-box;
  border-top: 1px solid #dddfe3;
}

.side-more .icon {
  margin-top: 12px;
}

/* 状态栏 */
.status-bar {
  display: flex;
  align-items: center;
  flex: none;
  height: 43px;
  padding: 0 22px 0 14px;
  box-sizing: border-box;
  border-top: 1px solid #dddfe3;
  background: #f5f6f8;
  white-space: nowrap;
}

.page-no {
  width: 93px;
  border-right: 1px solid #e2e4e8;
}

.words {
  width: 108px;
  padding-left: 13px;
  box-sizing: border-box;
}

.desktop .spell {
  height: 36px;
  margin: 0 4px 0 13px;
  padding: 0 4px 0 5px;
  gap: 4px;
  background: #ebf1fa;
}

.desktop .proof {
  margin: 0 28px 0 6px;
  padding-left: 13px;
  gap: 4px;
  border-left: 1px solid #e2e4e8;
}

.compat {
  padding-right: 7px;
  border-right: 1px solid #e2e4e8;
}

.desktop .missing {
  margin-left: 18px;
  gap: 4px;
}

.view-tools {
  display: flex;
  align-items: center;
  margin-left: auto;
}

.desktop .view-btn {
  width: 39px;
  height: 36px;
  justify-content: center;
}

.desktop .view-btn.eye {
  width: 46px;
  height: 26px;
  padding-right: 16px;
  margin-right: 11px;
  box-sizing: border-box;
  border-right: 1px solid #e2e4e8;
}

.desktop .view-btn.pageView {
  width: 36px;
  margin-right: 2px;
  background: #dde1e6;
}

.desktop .view-btn.fit {
  width: 52px;
  height: 26px;
  margin-left: 9px;
  padding-left: 8px;
  box-sizing: border-box;
  border-left: 1px solid #e2e4e8;
}

.desktop .zoom-value {
  gap: 6px;
  width: 71px;
  padding-left: 2px;
  color: #535c70;
}

.zoom-slider {
  width: 207px;
  height: 22px;
  margin: 0 15px;
  appearance: none;
  background: linear-gradient(#343946, #343946) left center / 67px 1px no-repeat,
    linear-gradient(#c5c8ce, #c5c8ce) center / 1px 8px no-repeat,
    linear-gradient(#c5c8ce, #c5c8ce) center / 100% 1px no-repeat;
}

.zoom-slider::-webkit-slider-thumb {
  width: 18px;
  height: 18px;
  appearance: none;
  border: 1px solid #343946;
  border-radius: 50%;
  background: #eee;
}

.full-btn {
  margin-left: 15px;
}

/* 任务栏 */
.task-bar {
  display: flex;
  flex: none;
  align-items: center;
  height: 60px;
  background: linear-gradient(90deg, #26323f, #283543 65%, #222222 85%, #202020);
  color: #fff;
}

.start {
  margin: 0 47px 0 24px;
}

.start svg {
  width: 24px;
}

.pinwheel svg {
  width: 32px;
}

.web-search {
  display: flex;
  align-items: center;
  width: 275px;
  height: 43px;
  margin: 0 12px 0 23px;
  background: #efefed;
}

.ie {
  width: 24px;
  margin: 0 5px 0 7px;
}

.web-search input {
  flex: 1;
  min-width: 0;
  padding: 0 0 0 7px;
  border: 0;
  outline: 0;
  background: none;
  color: #000;
  font: inherit;
  font-size: 15px;
}

.desktop .web-search button {
  align-self: stretch;
  width: 70px;
  justify-content: center;
  background: #218bff;
  font-size: 15px;
}

.task-grip {
  width: 2px;
  height: 36px;
  margin-right: 18px;
  border: 1px solid #4c5662;
  border-width: 0 1px;
}

.desktop .app {
  width: 73px;
  height: 60px;
  margin-right: 2px;
  justify-content: center;
  box-sizing: border-box;
}

.app svg {
  width: 36px;
}

.app.running {
  background: linear-gradient(#76b9ed, #76b9ed) center bottom / 61px 3px no-repeat;
}

.app.front {
  background: linear-gradient(#76b9ed, #76b9ed) center bottom / 100% 3px no-repeat, #535f6c;
}

.task-right {
  display: flex;
  align-items: center;
  height: 60px;
  margin-left: auto;
  margin-right: 7px;
  border-right: 1px solid #777;
}

.weather {
  position: relative;
  display: flex;
  flex-direction: column;
  align-items: center;
  width: 72px;
  margin-right: 8px;
  font-size: 17px;
}

.cloud {
  position: absolute;
  left: 2px;
  top: 5px;
  width: 36px;
}

.outdoor {
  position: absolute;
  left: 48px;
  top: 12px;
  font-size: 20px;
  z-index: 1;
}

.tray {
  display: grid;
  grid-template-columns: repeat(20, 36px);
  justify-items: center;
}

.tray svg {
  width: 24px;
}

.clock {
  display: flex;
  flex-direction: column;
  align-items: center;
  width: 108px;
  margin-left: 17px;
}

.desktop .notice {
  position: relative;
  width: 44px;
  margin-left: 20px;
}

.notice svg {
  width: 24px;
}

.count {
  position: absolute;
  left: 14px;
  top: 12px;
  width: 22px;
  height: 20px;
  background: #e10012;
  font-size: 14px;
  line-height: 20px;
  text-align: center;
}

/* 悬浮层 */
.meter {
  position: absolute;
  z-index: 2;
}

.meter-left {
  left: 3px;
  top: 9px;
  width: 12px;
  height: 86px;
  border-radius: 5px;
  background: repeating-linear-gradient(transparent 0 2px, #6d6f70 2px 4px) left bottom / 100% 20px no-repeat,
    linear-gradient(#27375f 36px, #6b6b6c 36px 66px, #6acb75 66px);
}

.meter-right {
  right: 0;
  top: 174px;
  width: 15px;
  height: 89px;
  border-radius: 5px 0 0 5px;
  background: repeating-linear-gradient(transparent 0 2px, #4a5160 2px 3px) 6px 10px / 6px 70px no-repeat,
    linear-gradient(#31394a 18px, #d3a93d 18px, #79b85b 45px, #47bba0) 6px 10px / 6px 70px no-repeat,
    #4f586b;
}

.yellow-strip {
  position: absolute;
  right: 0;
  bottom: 60px;
  width: 6px;
  height: 109px;
  border-radius: 3px 0 0 0;
  background: #f3cf3f;
  box-shadow: -2px 0 4px rgba(0, 0, 0, 0.12);
}

.pointer {
  position: absolute;
  right: 62px;
  top: 550px;
  width: 12px;
  fill: #fff;
  stroke: #000;
}
</style>
